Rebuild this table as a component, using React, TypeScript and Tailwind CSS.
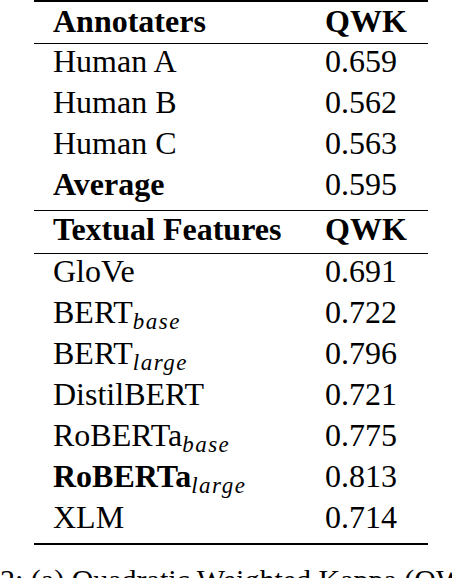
import React from "react";

type Row = {
  name: string;
  sub?: string;
  value: string;
  bold?: boolean;
};

const humanRows: Row[] = [
  { name: "Human A", value: "0.659" },
  { name: "Human B", value: "0.562" },
  { name: "Human C", value: "0.563" },
  { name: "Average", value: "0.595", bold: true },
];

const featureRows: Row[] = [
  { name: "GloVe", value: "0.691" },
  { name: "BERT", sub: "base", value: "0.722" },
  { name: "BERT", sub: "large", value: "0.796" },
  { name: "DistilBERT", value: "0.721" },
  { name: "RoBERTa", sub: "base", value: "0.775" },
  { name: "RoBERTa", sub: "large", value: "0.813", bold: true },
  { name: "XLM", value: "0.714" },
];

function HeaderRow({ title, pad }: { title: string; pad: string }) {
  return (
    <div className={`grid grid-cols-[291px_1fr] h-[41px] font-bold ${pad}`}>
      <div className="pl-[19px]">{title}</div>
      <div>QWK</div>
    </div>
  );
}

function BodyRow({ row }: { row: Row }) {
  return (
    <div className="grid grid-cols-[291px_1fr] h-[41px] pt-[1px]">
      <div className="pl-[19px] whitespace-nowrap">
        <span className={row.bold ? "font-bold" : ""}>{row.name}</span>
        {row.sub && (
          <span className="italic text-[23px] relative top-[6px] tracking-[1.5px]">
            {row.sub}
          </span>
        )}
      </div>
      <div>{row.value}</div>
    </div>
  );
}

export default function App() {
  return (
    <div className="w-[452px] h-[578px] bg-white text-black overflow-hidden font-['Liberation_Serif',serif]">
      <div className="ml-[34px] w-[394px] text-[32px] leading-[32px]">
        <div className="h-[2px] bg-black" />
        <HeaderRow title="Annotaters" pad="pt-[3px]" />
        <div className="h-px bg-black" />
        {humanRows.map((row, index) => (
          <BodyRow key={index} row={row} />
        ))}
        <div className="h-px bg-black mt-[2px]" />
        <HeaderRow title="Textual Features" pad="pt-[2px]" />
        <div className="h-px bg-black mt-px" />
        {featureRows.map((row, index) => (
          <BodyRow key={index} row={row} />
        ))}
        <div className="h-[2px] bg-black mt-[2px]" />
      </div>
      <div className="mt-[20px] text-[30px] leading-[30px] whitespace-nowrap">
        2: (a) Quadratic Weighted Kappa (QWK)
      </div>
    </div>
  );
}
